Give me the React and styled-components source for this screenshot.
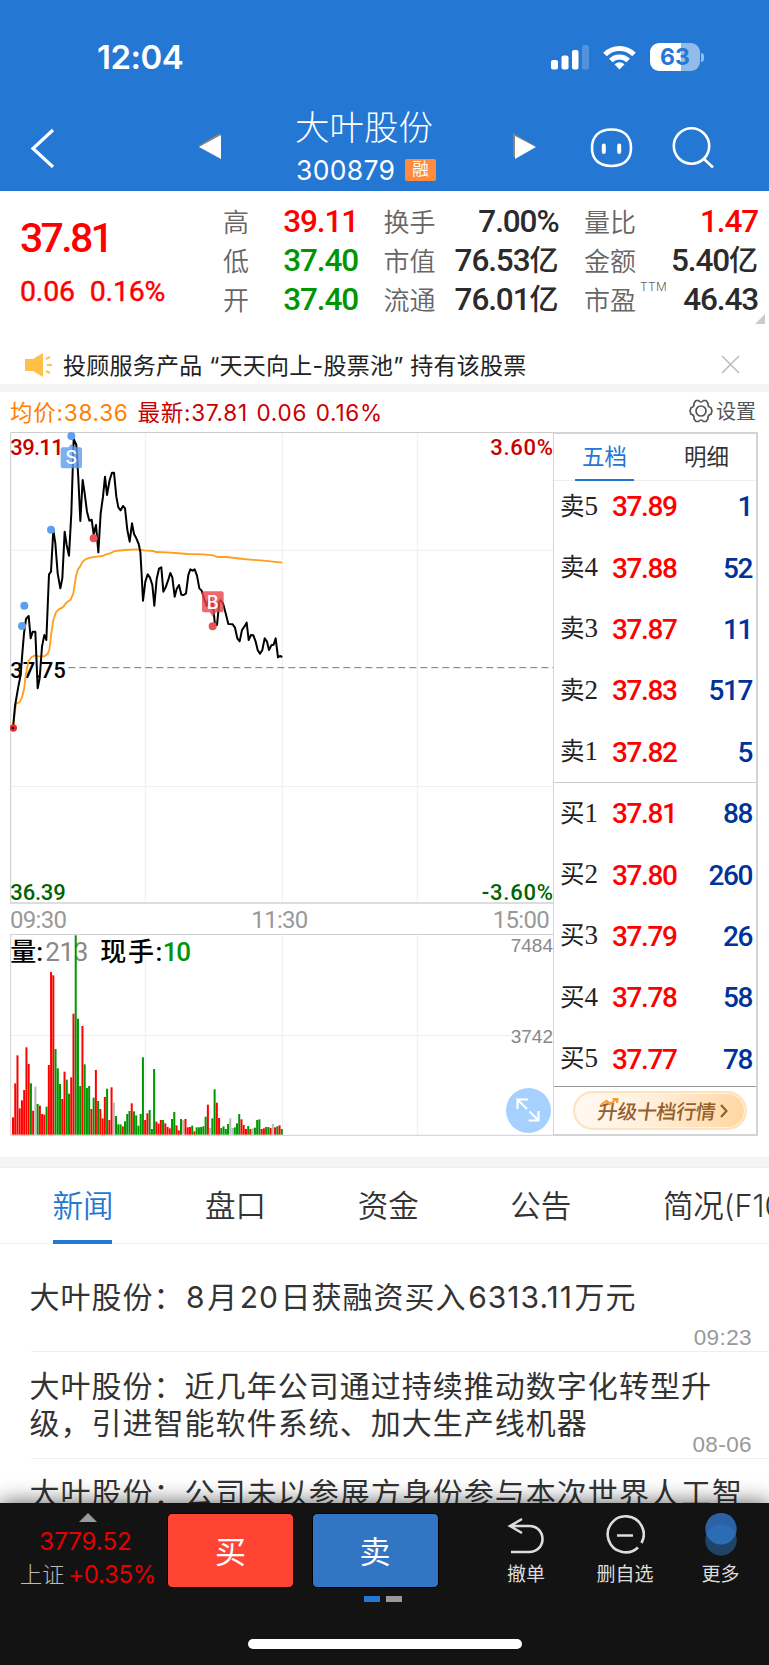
import React from 'react';
import styled, { createGlobalStyle } from 'styled-components';

const GlobalStyle = createGlobalStyle`
  *{
    box-sizing: border-box;
  }
  body{
    margin: 0;
    background-color: #fff;
    font-family: Inter, "Noto Sans CJK SC", sans-serif;
    color: #333;
  }
`;

const Page = styled.div`
  width: 769px;
  height: 1665px;
  display: flex;
  flex-direction: column;
  overflow: hidden;
`;

/* ---------- header ---------- */

const Header = styled.header`
  flex: none;
  height: 191px;
  background-color: #2577d4;
  color: #fff;
`;

const StatusBar = styled.div`
  display: flex;
  align-items: center;
  height: 114px;
  padding: 0 65px 0 97px;
  time{
    flex: 1;
    font-size: 33px;
    font-weight: 600;
    letter-spacing: -.5px;
  }
  svg{
    margin-left: 14px;
  }
`;

const Battery = styled.div`
  width: 50px;
  height: 28px;
  margin-left: 14px;
  border-radius: 9px;
  background: linear-gradient(to right, #fff 62%, #92bbea 62%);
  color: #2577d4;
  font-size: 23px;
  font-weight: 700;
  line-height: 28px;
  text-align: center;
`;

const BatteryTip = styled.i`
  width: 3px;
  height: 9px;
  margin-left: 1px;
  border-radius: 0 4px 4px 0;
  background-color: #92bbea;
`;

const NavBar = styled.nav`
  display: flex;
  height: 77px;
  padding-left: 30px;
  svg{
    flex: none;
  }
`;

const StockTitle = styled.div`
  width: 142px;
  margin: -7px 76px 0 75px;
  h1{
    margin: 0 0 0 -1px;
    font-size: 34.5px;
    font-weight: 300;
    line-height: 42px;
    white-space: nowrap;
  }
  div{
    display: flex;
    align-items: center;
    height: 28px;
    margin-top: 7px;
    font-size: 26.5px;
    letter-spacing: .3px;
  }
`;

const MarginBadge = styled.span`
  width: 31px;
  height: 22px;
  margin-left: 10px;
  border-radius: 2px;
  background-color: #ff8c3c;
  font-size: 16.5px;
  line-height: 20px;
  text-align: center;
`;

/* ---------- quote ---------- */

const Quote = styled.section`
  position: relative;
  flex: none;
  display: flex;
  height: 149px;
  padding: 11px 11px 0 20px;
`;

const LastPrice = styled.div`
  width: 204px;
  font-family: Roboto, sans-serif;
  font-weight: 500;
  color: #f00;
  strong{
    display: block;
    height: 73px;
    padding-top: 12px;
    font-size: 41px;
    font-weight: 500;
    letter-spacing: -2.7px;
    line-height: 48px;
  }
  span{
    margin-right: 15px;
    font-size: 28.5px;
    font-weight: 400;
    -webkit-text-stroke: .4px;
    letter-spacing: -.2px;
  }
`;

const Stats = styled.dl`
  display: grid;
  grid-template-columns: 135px 175px 174px;
  grid-auto-rows: 39px;
  column-gap: 25.5px;
  margin: 0;
`;

const Stat = styled.div`
  display: flex;
  justify-content: space-between;
  align-items: center;
  white-space: nowrap;
  dt{
    margin-top: -3px;
    font-size: 26px;
    font-weight: 350;
    color: #666;
  }
  dt sup{
    position: absolute;
    margin: -1px 0 0 4px;
    font-size: 12px;
    letter-spacing: .4px;
  }
  dd{
    margin: 1px 0 0;
    font-family: Roboto, "Noto Sans CJK SC", sans-serif;
    font-size: 31.5px;
    font-weight: 500;
    letter-spacing: -1.1px;
    line-height: 38px;
    color: ${p => p.$color || '#2b2b2b'};
  }
  dd span{
    font-size: 29px;
    letter-spacing: 0;
  }
`;

const Corner = styled.i`
  position: absolute;
  right: 4px;
  bottom: 16px;
  border: 5px solid transparent;
  border-right-color: #ccc;
  border-bottom-color: #ccc;
`;

const Notice = styled.div`
  flex: none;
  display: flex;
  align-items: center;
  height: 44px;
  padding: 5px 29px 0 25px;
  font-size: 23px;
  letter-spacing: .25px;
  color: #222;
  span{
    flex: 1;
    margin: -1px 0 0 11px;
    white-space: pre;
  }
`;

const Gap = styled.div`
  flex: none;
  height: ${p => p.$height}px;
  background-color: #f4f4f4;
`;

const Legend = styled.div`
  flex: none;
  display: flex;
  align-items: center;
  height: 40px;
  padding: 0 13px 0 10px;
  font-size: 22.5px;
  letter-spacing: .75px;
  word-spacing: 1.5px;
  white-space: pre;
`;

const LegendItem = styled.span`
  margin: -2px 9px 0 0;
  color: ${p => p.$color};
`;

const Settings = styled.button`
  display: flex;
  align-items: center;
  gap: 3px;
  margin: -3px 0 0 auto;
  padding: 0;
  border: 0;
  background: none;
  font: 20px "Noto Sans CJK SC", sans-serif;
  color: #555;
`;

/* ---------- charts ---------- */

const Market = styled.section`
  flex: none;
  display: flex;
  height: 725px;
  padding-left: 10px;
`;

const Charts = styled.div`
  position: relative;
  width: 543px;
  height: 704px;
  svg{
    display: block;
  }
`;

const TimeAxis = styled.div`
  display: flex;
  justify-content: space-between;
  width: 543px;
  height: 30px;
  padding: 2px 4px 0 0;
  font: 24px/29px Roboto, sans-serif;
  letter-spacing: -.7px;
  color: #999;
`;

const ExpandButton = styled.button`
  position: absolute;
  right: 2px;
  bottom: 3px;
  width: 45px;
  height: 45px;
  padding: 0;
  border: 0;
  border-radius: 50%;
  background-color: #a6d1ff;
`;

const Book = styled.div`
  width: 205px;
  height: 704px;
  border: solid #d4d4d4;
  border-width: 2px 2px 2px 1px;
`;

const BookTabs = styled.div`
  display: flex;
  justify-content: space-between;
  height: 47px;
  padding: 0 20px 0 21px;
  border-bottom: 1px solid #eee;
`;

const BookTab = styled.a`
  width: 59px;
  height: 47px;
  border-bottom: 2px solid ${p => p.$active ? '#2577d4' : 'transparent'};
  font-size: 22.5px;
  line-height: 46px;
  text-align: center;
  color: ${p => p.$active ? '#2577d4' : '#333'};
`;

const Levels = styled.div`
  display: flex;
  flex-direction: column;
  height: ${p => p.$height}px;
  margin-top: ${p => p.$lift || 0}px;
  border-bottom: 1px solid ${p => p.$line};
`;

const Level = styled.div`
  flex: none;
  display: flex;
  align-items: center;
  height: 61.4px;
  padding: 0 4px 0 6px;
  font: 500 28px Roboto, sans-serif;
  label{
    width: 52px;
    margin-top: -5px;
    font: 24.5px "Noto Sans CJK SC", sans-serif;
    color: #222;
  }
  label b{
    font: 27px "Liberation Serif", serif;
  }
  span{
    flex: 1;
    letter-spacing: -1.4px;
    color: #f00;
  }
  em{
    font-style: normal;
    letter-spacing: -1.4px;
    color: #003399;
  }
`;

const UpgradeButton = styled.button`
  display: flex;
  align-items: center;
  justify-content: center;
  gap: 5px;
  width: 174px;
  height: 39px;
  margin: 4px 0 0 19px;
  padding: 0 0 0 6px;
  border: 2px solid #fde3c0;
  border-radius: 20px;
  box-shadow: inset 0 0 0 1px #fff3e2;
  background: linear-gradient(100deg, #fffaf4, #ffefda 45%, #ffd6a0);
  color: #95602c;
  font: 500 20px "Noto Sans CJK SC", sans-serif;
  span{
    position: relative;
    transform: skewX(-8deg);
    letter-spacing: -.4px;
  }
  span svg{
    position: absolute;
    left: 1px;
    top: 2px;
  }
`;

/* ---------- news ---------- */

const NewsTabs = styled.div`
  flex: none;
  display: flex;
  height: 77px;
  padding-left: 52.5px;
  border: solid #eee;
  border-width: 1px 0;
`;

const NewsTab = styled.a`
  flex: none;
  width: 152.6px;
  font-size: 30.5px;
  font-weight: 350;
  line-height: 76px;
  white-space: nowrap;
  color: ${p => p.$active ? '#2577d4' : '#333'};
  &::after{
    content: '';
    display: ${p => p.$active ? 'block' : 'none'};
    width: 59px;
    height: 4px;
    margin-top: -4px;
    background-color: #2577d4;
  }
`;

const NewsList = styled.div`
  flex: none;
  height: 259px;
  padding-top: 1px;
  overflow: hidden;
`;

const NewsItem = styled.article`
  display: flex;
  flex-direction: column;
  height: 107px;
  margin-left: 31px;
  padding: ${p => p.$top}px 17px 0 0;
  border-bottom: 1px solid #eee;
  p{
    flex: none;
    align-self: flex-start;
    margin: 0 0 -14px -1.5px;
    font-size: 30px;
    letter-spacing: 1.02px;
    line-height: 37px;
    white-space: pre;
  }
  p span{
    margin: 0 1.5px;
  }
  time{
    align-self: flex-end;
    margin: auto 0 0;
    font: 22.5px/26px "Liberation Sans", sans-serif;
    letter-spacing: .4px;
    color: #999;
  }
`;

/* ---------- footer ---------- */

const Footer = styled.footer`
  position: relative;
  flex: none;
  height: 162px;
  background-color: #131313;
  box-shadow: 0 -1px 20px rgba(0, 0, 0, .6);
  color: #fff;
`;

const Actions = styled.div`
  display: flex;
  height: 86px;
  padding-top: 10px;
  > *{
    flex: none;
  }
`;

const IndexInfo = styled.div`
  display: flex;
  flex-direction: column;
  align-items: center;
  width: 167px;
  padding-left: 9px;
  font-size: 24px;
  line-height: 28px;
  letter-spacing: -.3px;
  color: #e60000;
  i{
    margin-top: -5px;
    border: 9px solid transparent;
    border-bottom-color: #999;
    border-top-width: 5px;
  }
  div{
    margin: 6px 0 5px;
    padding-right: 5px;
    letter-spacing: 0;
  }
  p{
    margin: 0;
    white-space: nowrap;
  }
  small{
    margin-right: 4px;
    font-size: 22.5px;
    font-weight: 300;
    color: #bbb;
  }
`;

const TradeButton = styled.button`
  width: 127px;
  height: 75px;
  margin: 0 17.5px 0 0;
  padding: 0 0 3px;
  border: 1px solid #000;
  border-radius: 5px;
  background-color: ${p => p.$color};
  color: #fff;
  font: 31px "Noto Sans CJK SC", sans-serif;
`;

const Tool = styled.div`
  display: flex;
  flex-direction: column;
  align-items: center;
  width: ${p => p.$width}px;
  margin-left: ${p => p.$left || 0}px;
  font-size: 19px;
  line-height: 24px;
  white-space: nowrap;
  color: #ddd;
  svg{
    flex: none;
    height: 46px;
    margin-bottom: 4px;
  }
`;

const Pager = styled.div`
  display: flex;
  gap: 6px;
  margin: 7px 0 0 364px;
  i{
    width: 16px;
    height: 6px;
    background-color: #999;
  }
  i:first-child{
    background-color: #2577d4;
  }
`;

const HomeIndicator = styled.div`
  width: 274px;
  height: 10px;
  margin: 37px 0 0 248px;
  border-radius: 5px;
  background-color: #fff;
`;

const STATS = [
    { label: '高', value: '39.11', color: '#f00' },
    { label: '换手', value: '7.00%' },
    { label: '量比', value: '1.47', color: '#f00' },
    { label: '低', value: '37.40', color: '#009600' },
    { label: '市值', value: '76.53', unit: '亿' },
    { label: '金额', value: '5.40', unit: '亿' },
    { label: '开', value: '37.40', color: '#009600' },
    { label: '流通', value: '76.01', unit: '亿' },
    { label: '市盈', sup: 'TTM', value: '46.43' }
];

const SELLS = [['5', '37.89', 1], ['4', '37.88', 52], ['3', '37.87', 11], ['2', '37.83', 517], ['1', '37.82', 5]];
const BUYS = [['1', '37.81', 88], ['2', '37.80', 260], ['3', '37.79', 26], ['4', '37.78', 58], ['5', '37.77', 78]];

// chart units are a third of a pixel
const PRICE_LINE = '39,924 45,858 55,800 62,765 67,700 72,640 78,597 86,588 92,655 98,635 106,635 113,805 119,775 126,680 133,645 139,660 147,463 153,455 160,330 166,370 173,460 181,505 187,475 194,335 200,375 207,407 214,280 221,57 229,75 235,175 241,303 248,180 254,220 261,275 268,302 275,299 281,343 288,315 295,397 302,280 309,230 315,170 321,225 329,180 336,158 342,158 349,230 355,262 362,271 369,258 375,265 382,330 389,365 396,310 402,342 409,355 416,372 421,395 425,465 429,542 436,485 443,463 450,473 457,495 463,557 470,477 477,446 484,442 490,515 497,502 504,482 511,459 517,472 524,530 530,507 537,495 544,524 551,525 558,520 565,465 571,448 578,452 584,448 591,467 598,505 605,512 612,535 620,558 628,530 636,548 641,575 645,615 651,615 658,545 662,540 669,550 677,580 685,612 698,613 705,623 712,655 719,664 726,630 733,620 740,608 746,660 753,645 760,646 767,665 773,690 780,701 787,690 794,655 801,665 807,690 814,676 821,674 827,655 834,712 840,708 847,711';
const AVG_LINE = '39,924 48,850 58,847 66,832 72,808 78,760 86,722 95,711 106,706 113,709 133,709 142,703 148,690 154,640 160,600 168,577 176,568 188,562 200,547 212,539 220,520 228,468 234,448 240,440 248,425 256,418 270,413 290,410 308,408 318,403 330,400 345,393 375,390 410,388 432,391 460,393 466,396 500,397 565,402 610,403 640,406 652,411 680,411 730,417 790,422 847,428';

// one bar a minute: colour (r up, g down, s flat) and the y of its top
const VOLUME = 'r652 r550 r466 r625 r601 r570 r442 r492 g550 r632 s560 g612 r617 r642 r644 g620 r495 r216 r226 g447 g505 g552 r597 r515 g539 g581 r532 r341 g106 g356 g558 r378 g493 g564 g558 r627 g593 r510 g603 r627 r655 r591 g566 r660 r562 s608 g648 g673 g673 r679 g664 g642 g633 r610 g634 g646 g677 g642 g472 r660 r640 g630 g687 g507 r665 r671 r660 g660 r670 r681 r685 g657 g636 r676 r691 g657 s660 r657 r682 r681 g677 r694 g682 g682 g681 g679 g650 r614 s684 g655 g568 r608 r654 g684 g679 g687 g672 s655 s684 g682 g670 g642 r658 r675 r687 g678 r687 s685 g683 g660 g658 r687 r685 g681 g681 r684 s672 r682 g679 r676 g687'.split(' ');
const BAR_COLORS = { r: '#ff0000', g: '#009600', s: '#b8b8b8' };

const NEWS = [
    { text: '大叶股份：8月20日获融资买入6313.11万元', time: '09:23', top: 34 },
    { text: '大叶股份：近几年公司通过持续推动数字化转型升\n级，引进智能软件系统、加大生产线机器', time: '08-06', top: 16 },
    { text: '大叶股份：公司未以参展方身份参与本次世界人工智', top: 16 }
];

function PriceChart() {
    return (
        <svg width="543" height="472" viewBox="30 36 1629 1416" fontFamily="Roboto, sans-serif" fontSize="66">
            <g stroke="#eee" strokeWidth="3">
                <path d="M436 37V1452M847 37V1452M1252 37V1452M31 391H1659M31 1100H1659" />
                <path d="M32 1452V37.500H1659" stroke="#ccc" fill="none" />
                <path d="M31 1449H1659" stroke="#ddd" strokeWidth="6" />
            </g>
            <g fontWeight="500">
                <text x="31" y="104" textLength="160" fill="#c80000">39.11</text>
                <text x="1659" y="104" textLength="188" textAnchor="end" fill="#c80000">3.60%</text>
                <text x="31" y="1441" textLength="166" fill="#006400">36.39</text>
                <text x="1659" y="1441" textLength="214" textAnchor="end" fill="#006400">-3.60%</text>
                <text x="31" y="773" textLength="166" fill="#000">37.75</text>
            </g>
            <path d="M205 743H1659" stroke="#777" strokeWidth="3" strokeDasharray="21 12" />
            <polyline points={AVG_LINE} fill="none" stroke="#ff9f1a" strokeWidth="5.500" strokeLinejoin="round" />
            <polyline points={PRICE_LINE} fill="none" stroke="#000" strokeWidth="6" strokeLinejoin="round" />
            <g fill="#5f9ff0">
                <circle cx="214" cy="48" r="12" />
                <circle cx="153" cy="329" r="12" />
                <circle cx="73" cy="557" r="12" />
                <circle cx="66" cy="618" r="12" />
            </g>
            <g fill="#ee5055">
                <circle cx="281" cy="355" r="12" />
                <circle cx="638" cy="619" r="12" />
                <circle cx="40" cy="924" r="11" fill="#ee2b30" />
            </g>
            <circle cx="39" cy="924" r="4" />
            <path d="M188 82H205L214 72L223 82H240Q246 82 246 88V139Q246 145 240 145H188Q182 145 182 139V88Q182 82 188 82Z" fill="#5b9cf0" fillOpacity=".8" />
            <path d="M612 514H665Q671 514 671 520V571Q671 577 665 577H648L638 590L629 577H612Q606 577 606 571V520Q606 514 612 514Z" fill="#ea4448" fillOpacity=".8" />
            <g fill="#fff" fontFamily="Inter, sans-serif" fontSize="54" fontWeight="500" textAnchor="middle">
                <text x="214" y="133">S</text>
                <text x="638" y="566">B</text>
            </g>
        </svg>
    )
}

function VolumeChart() {
    return (
        <svg width="543" height="202" viewBox="30 102 1629 606">
            <g stroke="#eee" strokeWidth="3" fill="none">
                <path d="M436 102V706M847 102V706M1252 102V706M31 407H1659" />
                <path d="M32 102V706H1659M31 103.500H1659" stroke="#d0d0d0" />
            </g>
            <g fontFamily="Liberation Sans, sans-serif" fontSize="57" fill="#888" textAnchor="end">
                <text x="1659" y="155">7484</text>
                <text x="1659" y="430">3742</text>
            </g>
            <g fontFamily="Roboto, Noto Sans CJK SC, sans-serif" fontSize="78" fontWeight="500">
                <text x="31" y="182">量:</text>
                <text x="136" y="182" textLength="129" fontWeight="400" fill="#888">213</text>
                <text x="301" y="182" textLength="186">现手:</text>
                <text x="488" y="182" textLength="85" fill="#009600">10</text>
            </g>
            {
                VOLUME.map((bar, i) => {
                    let top = Number(bar.slice(1));
                    return (
                        <rect key={i} x={36 + i * 6.72} y={top} width="6" height={704 - top} fill={BAR_COLORS[bar[0]]} />
                    )
                })
            }
        </svg>
    )
}

function LevelRows({ side, rows }) {
    return rows.map(([no, price, qty]) => (
        <Level key={no}>
            <label>{side}<b>{no}</b></label>
            <span>{price}</span>
            <em>{qty}</em>
        </Level>
    ))
}

// numbers inside a headline get a little air on both sides
function Headline({ text }) {
    return (
        <p>
            {text.split(/([\d.]+)/).map((part, i) => i % 2 ? <span key={i}>{part}</span> : part)}
        </p>
    )
}

export default function App() {
    return (
        <Page>
            <GlobalStyle />
            <Header>
                <StatusBar>
                    <time>12:04</time>
                    <svg width="38" height="25" viewBox="0 0 38 25" fill="#fff">
                        <rect x="0" y="15" width="7" height="9.500" rx="2" />
                        <rect x="10.500" y="10.500" width="7" height="14" rx="2" />
                        <rect x="21" y="5" width="6.500" height="19.500" rx="2" />
                        <rect x="31" y="0" width="7" height="24.500" rx="2" opacity=".2" />
                    </svg>
                    <svg width="33" height="25" viewBox="0 0 33 25" fill="none" stroke="#fff" strokeWidth="5">
                        <path d="M2 9.500A20.500 20.500 0 0 1 31 9.500" />
                        <path d="M7.800 15.500A12.300 12.300 0 0 1 25.200 15.500" />
                        <path d="M16.500 24.500L11.500 19.300Q16.500 15 21.500 19.300Z" fill="#fff" stroke="none" />
                    </svg>
                    <Battery>63</Battery>
                    <BatteryTip />
                </StatusBar>
                <NavBar>
                    <svg width="25" height="40" viewBox="0 0 25 40" fill="none" stroke="#fff" strokeWidth="3.200" style={{ marginTop: 14 }}>
                        <path d="M23 2L3 20.500L23 39" />
                    </svg>
                    <svg width="23" height="28" viewBox="0 0 23 28" style={{ margin: '18px 0 0 143px' }}>
                        <path d="M0 14L22 1V4L4 15Z" fill="#8a8478" />
                        <path d="M1 15L23 3V27Z" fill="#fff" />
                    </svg>
                    <StockTitle>
                        <h1>大叶股份</h1>
                        <div>300879<MarginBadge>融</MarginBadge></div>
                    </StockTitle>
                    <svg width="23" height="28" viewBox="0 0 23 28" style={{ marginTop: 18, marginLeft: -1 }}>
                        <path d="M0 1L22 14L2 25H0Z" fill="#8a8478" />
                        <path d="M2 4L23 15L2 27Z" fill="#fff" />
                    </svg>
                    <svg width="43" height="40" viewBox="0 0 43 40" fill="none" stroke="#fff" strokeWidth="2.600" style={{ margin: '14px 0 0 54px' }}>
                        <path d="M21.500 1.500C34 1.500 41 8.500 41 20S34 38 21.500 38S2 31.500 2 20S9 1.500 21.500 1.500Z" />
                        <path d="M13.800 17.500V24M29.200 17.500V24" strokeWidth="4" strokeLinecap="round" />
                    </svg>
                    <svg width="42" height="42" viewBox="0 0 42 42" fill="none" stroke="#fff" strokeWidth="2.600" style={{ margin: '12px 0 0 39px' }}>
                        <circle cx="19.500" cy="20" r="17.700" />
                        <path d="M31.500 32.500L41 41.500" />
                    </svg>
                </NavBar>
            </Header>

            <Quote>
                <LastPrice>
                    <strong>37.81</strong>
                    <span>0.06</span>
                    <span>0.16%</span>
                </LastPrice>
                <Stats>
                    {
                        STATS.map(item => (
                            <Stat key={item.label} $color={item.color}>
                                <dt>{item.label}{item.sup && <sup>{item.sup}</sup>}</dt>
                                <dd>{item.value}{item.unit && <span>{item.unit}</span>}</dd>
                            </Stat>
                        ))
                    }
                </Stats>
                <Corner />
            </Quote>
            <Notice>
                <svg width="27" height="24" viewBox="0 0 27 24">
                    <path d="M0 6H8L18 0V24L8 18H0Z" fill="#ffc04a" />
                    <path d="M21 6L25 4M22 12H27M21 18L25 20" stroke="#ffc04a" strokeWidth="2" />
                </svg>
                <span>投顾服务产品 “天天向上-股票池” 持有该股票</span>
                <svg width="19" height="19" viewBox="0 0 19 19" stroke="#bbb" strokeWidth="1.500">
                    <path d="M1 1L18 18M18 1L1 18" />
                </svg>
            </Notice>
            <Gap $height={8} />

            <Legend>
                <LegendItem $color="#ff8000">均价:38.36</LegendItem>
                <LegendItem $color="#c80000">最新:37.81 0.06 0.16%</LegendItem>
                <Settings>
                    <svg width="24" height="24" viewBox="0 0 24 24" fill="none" stroke="#555" strokeWidth="1.700" strokeLinejoin="round">
                        <path d="M7 1.500H9.500Q12 4.500 14.500 1.500H17L19 4.200Q18.500 8 22 8.800L23 12L22 15.200Q18.500 16 19 19.800L17 22.500H14.500Q12 19.500 9.500 22.500H7L5 19.800Q5.500 16 2 15.200L1 12L2 8.800Q5.500 8 5 4.200Z" />
                        <circle cx="12" cy="12" r="5" />
                    </svg>
                    设置
                </Settings>
            </Legend>

            <Market>
                <Charts>
                    <PriceChart />
                    <TimeAxis>
                        <span>09:30</span>
                        <span>11:30</span>
                        <span>15:00</span>
                    </TimeAxis>
                    <VolumeChart />
                    <ExpandButton>
                        <svg width="45" height="45" viewBox="0 0 45 45" fill="none" stroke="#fff" strokeWidth="2.200">
                            <path d="M22 11.500H11.500V21M12 12L21 21M32.500 23V32.500H22.500M32 32L23.500 23.500" />
                        </svg>
                    </ExpandButton>
                </Charts>
                <Book>
                    <BookTabs>
                        <BookTab $active>五档</BookTab>
                        <BookTab>明细</BookTab>
                    </BookTabs>
                    <Levels $height={307} $lift={-5} $line="#ccc">
                        <LevelRows side="卖" rows={SELLS} />
                    </Levels>
                    <Levels $height={304} $line="#999">
                        <LevelRows side="买" rows={BUYS} />
                    </Levels>
                    <UpgradeButton>
                        <span>
                            升级十档行情
                            <svg width="18" height="9" viewBox="0 0 18 9" fill="none" stroke="#ff9a2e" strokeWidth="2.200">
                                <path d="M1 7L6 3L10 6L16 1M12 1H17V5" />
                            </svg>
                        </span>
                        <svg width="8" height="14" viewBox="0 0 8 14" fill="none" stroke="#95602c" strokeWidth="2.200">
                            <path d="M1 1L6.500 7L1 13" />
                        </svg>
                    </UpgradeButton>
                </Book>
            </Market>
            <Gap $height={10} />

            <NewsTabs>
                <NewsTab $active>新闻</NewsTab>
                <NewsTab>盘口</NewsTab>
                <NewsTab>资金</NewsTab>
                <NewsTab>公告</NewsTab>
                <NewsTab>简况(F10)</NewsTab>
            </NewsTabs>
            <NewsList>
                {
                    NEWS.map(item => (
                        <NewsItem key={item.text} $top={item.top}>
                            <Headline text={item.text} />
                            {item.time && <time>{item.time}</time>}
                        </NewsItem>
                    ))
                }
            </NewsList>

            <Footer>
                <Actions>
                    <IndexInfo>
                        <i />
                        <div>3779.52</div>
                        <p><small>上证</small>+0.35%</p>
                    </IndexInfo>
                    <TradeButton $color="#ff4433">买</TradeButton>
                    <TradeButton $color="#3175c3">卖</TradeButton>
                    <Tool $width={140}>
                        <svg width="38" viewBox="0 -1 38 46" fill="none" stroke="#ddd" strokeWidth="2.600">
                            <path d="M4 12H22C40 12 40 38 22 38H4M15 5L3 12L15 19" />
                        </svg>
                        撤单
                    </Tool>
                    <Tool $width={58}>
                        <svg width="40" viewBox="0 -1 40 46" fill="none" stroke="#ddd" strokeWidth="2.600">
                            <path d="M36.500 29A18 18 0 1 0 33 33.500M12 21.500H28" />
                        </svg>
                        删自选
                    </Tool>
                    <Tool $width={95} $left={19}>
                        <svg width="34" viewBox="0 0 34 46">
                            <circle cx="17" cy="27" r="15.700" fill="#204467" />
                            <circle cx="17" cy="15.700" r="15.700" fill="#2b62a5" />
                            <path d="M2.350 21.350A15.700 15.700 0 0 1 31.650 21.350A15.700 15.700 0 0 1 2.350 21.350Z" fill="#2c6cb5" />
                        </svg>
                        更多
                    </Tool>
                </Actions>
                <Pager><i /><i /></Pager>
                <HomeIndicator />
            </Footer>
        </Page>
    )
}
